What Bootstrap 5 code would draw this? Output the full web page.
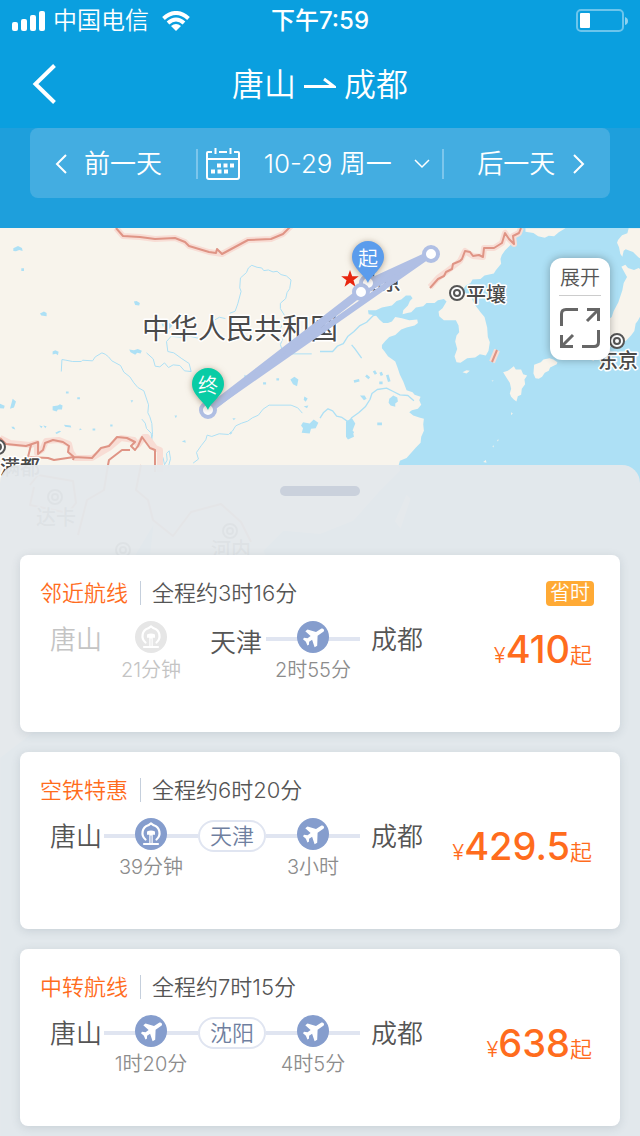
<!DOCTYPE html>
<html lang="zh-CN">
<head>
<meta charset="utf-8">
<meta name="viewport" content="width=device-width, initial-scale=1">
<title>唐山 — 成都</title>
<link rel="stylesheet" href="https://cdn.jsdelivr.net/npm/bootstrap@5.3.0/dist/css/bootstrap.min.css">
<style>
  body { font-family: Inter, "Noto Sans CJK SC", sans-serif; font-weight: 350; color: #555; background: #e3e8eb; line-height: 1.2; }
  button { font-family: inherit; font-weight: inherit; line-height: inherit; color: inherit; background: none; border: 0; padding: 0; }
  svg { display: block; flex: none; }
  .app-head { background: #0a9fdf; color: #fff; }
  .status-row { display: grid; grid-template-columns: 1fr auto 1fr; height: 40px; padding: 2px 12px 0; font-size: 24px; }
  .clock-text { font-weight: 500; font-size: 24px; }
  .title-row { display: grid; grid-template-columns: 64px 1fr 64px; height: 88px; }
  .title-row h1 { font-size: 32px; font-weight: 350; padding-top: 2px; }
  .date-band { background: #1e9fdc; height: 100px; padding: 0 30px; color: #fff; }
  .date-bar { display: grid; grid-template-columns: 2fr 3fr 2fr; height: 70px; border-radius: 8px; background: #43ade1; font-size: 26px; }
  .date-bar button { padding-top: 2px; }
  .date-pick::before, .date-pick::after { content: ""; width: 2px; height: 30px; background: #7cc6ec; }
  .stage { position: relative; }
  .map-art { position: absolute; inset: 0; width: 100%; height: 100%; }
  .map-label { fill: #4a4a4a; stroke: #fff; stroke-width: 3px; paint-order: stroke; stroke-linejoin: round; font-weight: 500; font-size: 20px; text-anchor: middle; }
  .country-label { font-size: 28px; font-weight: 400; }
  .pin-label { fill: #fff; font-size: 20px; font-weight: 350; text-anchor: middle; }
  .map-tools { position: relative; height: 237px; padding: 30px 30px 0; }
  .expand-btn { width: 60px; height: 102px; border-radius: 12px; background: #fff; box-shadow: 0 0 8px rgba(0,0,0,.3); font-size: 20px; color: #555; }
  .expand-btn span { border-bottom: 1px solid #ccc; padding: 0 1px 5px; margin: 8px 0 12px; }
  .sheet { position: relative; border-radius: 18px 18px 0 0; background: rgba(228,232,235,.96); padding: 21px 20px 10px; }
  .grip { width: 80px; height: 10px; border-radius: 5px; background: #cad1dc; margin: 0 auto 59px; display: block; }
  .trip-list { display: grid; gap: 20px; }
  .trip { height: 177px; border-radius: 8px; background: #fff; box-shadow: 0 2px 10px rgba(70,90,105,.16); padding: 24px 26px 0 20px; }
  .trip-kind { color: #ff6c1d; border-right: 1px solid #c5cfdc; padding-right: 12px; margin-right: 11px; line-height: 24px; }
  .trip-title { font-size: 22px; height: 28px; }
  .save-tag { background: #ffaa35; color: #fff; font-size: 20px; line-height: 25px; border-radius: 4px; padding: 0 4px; }
  .route { padding-left: 10px; margin-top: 14px; }
  .city { font-size: 26px; line-height: 32px; margin-top: 3px; width: 54px; }
  .leg { width: 94px; font-size: 20px; line-height: 24px; color: #8c8c8c; }
  .track { height: 32px; width: 100%; background: linear-gradient(#e0e5f1, #e0e5f1) 0 16px / 100% 4px no-repeat; }
  .track, .stop-pill { display: flex; justify-content: center; }
  .leg-time { margin-top: 5px; white-space: nowrap; }
  .stop { width: 68px; }
  .stop-pill { border: 2px solid #e0e5f1; border-radius: 16px; height: 32px; line-height: 29px; font-size: 22px; margin-top: 2px; color: #6f7f9f; }
  .stop .city { margin: 6px 0 0 12px; white-space: nowrap; }
  .faded .track { background: none; }
  .faded { color: #c4c4c4; }
  .end-city { margin-left: 11px; }
  .fare { color: #ff6c1d; font-size: 22px; line-height: 48px; margin-top: 18px; padding-right: 2px; white-space: nowrap; }
  .fare strong { font-size: 38px; font-weight: 500; }
</style>
</head>
<body>
<svg width="0" height="0" class="position-absolute" aria-hidden="true">
  <symbol id="plane" viewBox="0 0 32 32">
    <circle cx="16" cy="16" r="16" fill="#859dcd"/>
    <path fill="#fff" d="M26.600 8.200c.9 1 .3 2.300-1 3.100L20.600 14.700 20.200 24.800l-2.600 1.500-2.500-7.600-3 2.100-.2 3-1.500.8-1.500-3.900L6 18.200l1-1.400 3.600.4 3-2.200L8.300 10.300l2.200-1.800 8.500 2.400 5.500-3.300q1.300-.4 2.100.6z"/>
  </symbol>
  <symbol id="train" viewBox="0 0 32 32">
    <circle cx="16" cy="16" r="16" fill="currentColor"/>
    <path fill="none" stroke="#fff" stroke-width="2.200" stroke-linecap="round" stroke-linejoin="round" d="M10.500 21.500a8.200 8.200 0 0 1 2.800-14.200L16 5.300l2.700 2a8.200 8.200 0 0 1 2.800 14.200M9 26h14"/>
    <path fill="#fff" d="M12 13.400q4-2 8 0v3.400h-2.300V25h-3.400v-8.200H12z"/>
    <path stroke="currentColor" d="M16 17.500V25"/>
  </symbol>
</svg>

<header class="app-head">
  <div class="status-row align-items-center">
    <div class="d-flex align-items-center gap-2">
      <svg width="33" height="20" fill="#fff"><rect y="11" width="6" height="9" rx="2"/><rect x="9" y="8" width="6" height="12" rx="2"/><rect x="18" y="4" width="6" height="16" rx="2"/><rect x="27" width="6" height="20" rx="2"/></svg>
      <span>中国电信</span>
      <svg class="ms-1" width="30" height="20" viewBox="0 0 30 20"><g fill="none" stroke="#fff" stroke-width="4"><path d="M2.500 7.500Q15-3.500 27.500 7.500"/><path d="M7 12q8-7 16 0"/></g><path fill="#fff" d="M10 15q5-4 10 0l-5 5z"/></svg>
    </div>
    <time class="clock-text">下午7:59</time>
    <svg class="ms-auto" width="53" height="24"><rect x="2" y="1" width="46" height="21" rx="4" fill="none" stroke="#6cc5ec" stroke-width="2"/><rect x="5" y="4" width="10" height="15" rx="1" fill="#fff"/><path d="M50 8q3 1 3 4t-3 4z" fill="#8dd2f0"/></svg>
  </div>
  <div class="title-row align-items-center">
    <button type="button" aria-label="返回" class="ps-4 h-100"><svg class="ms-2" width="24" height="42" viewBox="0 0 24 42"><path d="M22.500 2.500 3.500 21l19 18.500" fill="none" stroke="#fff" stroke-width="4"/></svg></button>
    <h1 class="m-0 d-flex justify-content-center align-items-center gap-2">唐山<svg width="32" height="16"><path d="M0 9.500h30L20 2" fill="none" stroke="#fff" stroke-width="3"/></svg>成都</h1>
  </div>
</header>

<nav class="date-band" aria-label="日期">
  <div class="date-bar">
    <button type="button" class="d-flex align-items-center ps-4"><svg class="me-3" width="14" height="22"><path d="m12 2-9 9 9 9" fill="none" stroke="#fff" stroke-width="2"/></svg>前一天</button>
    <button type="button" class="date-pick d-flex align-items-center gap-2">
      <svg width="34" height="32" fill="none" stroke="#fff" stroke-width="2"><path d="M6 4H2q-1 0-1 1v24q0 2 2 2h28q2 0 2-2V5q0-1-1-1h-4M13 4h8M9.500 0v6M24.500 0v6M1 11h32"/><path d="M11 17.500h18M5 23.500h18" stroke-width="4" stroke-dasharray="4 2.500"/></svg>
      <span class="ms-3 me-auto">10-29 周一</span>
      <svg class="me-1" width="16" height="10"><path d="m1 1 7 7 7-7" fill="none" stroke="#fff" stroke-width="1.500"/></svg>
    </button>
    <button type="button" class="d-flex align-items-center justify-content-center ps-2">后一天<svg class="ms-3" width="14" height="22"><path d="m3 2 9 9-9 9" fill="none" stroke="#fff" stroke-width="2"/></svg></button>
  </div>
</nav>

<main class="stage overflow-hidden">
  <svg class="map-art" viewBox="0 228 640 908" preserveAspectRatio="xMidYMin slice" role="img" aria-label="航线地图">
    <rect y="228" width="640" height="908" fill="#f8f4ec"/>
    <!-- seas and east-coast islands -->
    <g transform="translate(320 225) scale(.333)">
      <path fill="#ade0f5" d="M970 0H608l-4 26-14 10-16 22-18 18-10 14-4 12 2 14-16 20-6 10-28 6-12 10-24 2-6 10-14 8-10 14 10 8 16 12 10 22 18 24 12 14 8 32 2 28 6 16-4 26-8 14-18-4-14 10-24 2-20 14-12-2-6-18 8-22-6-22 4-18 8-10-2-20-8-16-36 0-14-12-2-14 12-10 12-20-8-8-18 4-10 8-24 0-10 10-22 4-14 14-12 2-14 4 2-12 14-14 6-14 8-8-6-8-14 0-14 12-14 4-14 14-30 6-18 8-24 0 2 12 22 4 10 12 12 10 14 0 12-4 10-14 20 4 22 6 24-2 2 10-10 8-24 6-16 6-18 16-18 6-12 12-10 12 0 10 8 10 10 14 22 16 6 16 8 24 10 20 10 26 18 6 6 8 18 6-4 10 6 14-10 12-18 4-8 6 12 10 18 6 14 4-2 16 2 20-8 18-2 18-14 14-16 18-12 14-20 8-4 14 4 16-60 60-80 90-100 40-110-10-60 60 60 120 20 240-140 160-160-80-160-80L-500 900-620 1100-700 1400-960 1600V2800H970z"/>
      <g fill="#f8f4ec">
        <path d="M617 10h120l-20 12-14 12-16-2-12 6-20-4-14-10-24-4zM895 45l12-14 16-6 4-15h43v95l-14-8-16-16-10-4-12-4-6 4-4 18-6-8-4-20-6-14zM905 125l12-6 8 10 18 6 14-6 13 11v130l-8 4-8 14-6 8-4 22-10 14-16 16-20 6-14 8-20 6-22 4-14 20-6 16-12-4-8-12-6-12-14-2-12 10-10-8-10 10-20 2-12-16-14 2 12-16 24-18 14-14 26-18 20 2 14-6 12 2 24-16 26-18 6-18 14-26 12-36 4-22 10-18z"/>
        <path d="m643 420 20-8 8-8 18-4 12 4 12 8-2 6-20 10-4 10-12 6-8 12-10 6-10-2-6-14zM550 442l14-4 18-14 6 10 16 0 6 14 12 4-8 12 2 14-10 14-2 18-10 4-4 16-8-6-8-8-4-10 4-14-4-18-8-12zM428 442l12-6 10 2-10 8zM225 890l35-80 12 12-30 90zM574 562l5 4-5 5zM515 468l6-2-2 4zM532 646l5-2-3 6zM518 664l5-2-3 6zM490 712l8-6 2 8z"/>
      </g>
      <g fill="none" stroke="#ade0f5" stroke-width="4" stroke-linejoin="round">
        <path d="M0 380h38l14-16 18-8 14-22 18-14 18-18 20-10 20-20 16-4M0 580l10-16 14-12 14 6 12 16 16 4 20 14 10-14 20-14 20-18 14-22 6-18 16-12 28-4 20 10 20 10 24 2 18 16M95 360l10 12 20 28M84 590l10 14-8 12 14 6-16 14"/>
        <path d="m102 470 16-4m20-14 10 8m14-22 6 10m14-6 4 10m-8 22h10m14-24 6 20M172 597h14" stroke-width="8"/>
      </g>
      <path fill="#ade0f5" d="m208 522 12-10 12 6 2 12-8 6 0 10-14-4-6-8zM120 512l14 0 6 10-8 4zM78 590l18-10 10 16-8 20 4 20-18 8-6-8z"/>
    </g>
    <!-- rivers and lakes of the west -->
    <g transform="translate(0 225) scale(.333)" fill="none" stroke="#ade0f5" stroke-width="3" stroke-linejoin="round">
      <path d="M184 440l2-36 12 2 20 4 26 0 4-4 30 2 8-12 20-12 10 4 10 8 10 12 26 14 10 20 18 14 12 18 12 14 18 10 14 42-2 24 6 12 6 20 2 34-4 22 14 20 12 8 10 20 4 20 8-14-2-20 8-8 4 24-8 30M500 350l4 30 18 4 22 16 24 16 6 24-20-2-14-16-20-2-14 8-12-14-14 12-14-2-6-22-20-18M500 350l14-16 36 4 20-4 34 8M690 265l16-6 8-22 10-38-4-10 2-30 18-16 6-14 10-8 16 6 14 2 6 8 14-2 14 6 12-2 12 10 16 4 14 12-4 26-8 12-4 18-16 14 0 16 12 20-2 20-10 20 10 24-10 24 4 12 30 16h60M580 715l16-12-6-20 14-20 14-18 4-14 14 4 22-8 28 2 12-10 10-16 18-8 18-6 14-10 18-8 14-18 18-12h66l20 8 14 16M426 583l10 12 4 16 14 14 4 40 18 20M645 285l14-8 18 4"/>
      <path stroke="none" fill="#ade0f5" d="M40 70l14-7 12 6 2 9-10-3-10 4-8-1zM64 130h8v8h-8zM402 230l8-2 10 6-2 8-12-2zM120 266l12-6 8 4v10l-16-2zM158 380l8-4 10 5-2 10-6-4-10 2zM388 374l14 2 12-4 12 6-4 8-10-2-6 6-14-8zM158 544l16-2 6-4 8 4-2 12-12 0-4 6-12-4zM0 537l14 6-2 8-12-1zM38 522l10 8-6 18-12 4zM166 624l12-6 6 2-14 8zM192 600l20 2 2 6-18-2zM34 606l8 0 4 8-8-2zM118 602l10 2-4 6zM130 602l10 2-4 6zM240 610l6 4-8 2zM278 611h8v6h-8zM331 599h7v6h-7zM198 500h8v6h-8zM232 517h8v6h-8zM524 572l8 0-4 8zM392 526l8 0-4 8zM546 650l10-4 2 8zM734 450l10 6-2 6-8-4zM790 472h9v7h-9zM830 460h8v7h-8zM872 464l12-8 12 8-4 20-12-6zM482 286l20 4 16 12-10 10-20-8zM914 515l10 6-6 10-6-6zM912 544l14-2-4 8zM910 592l20 4 12-12 14 10-8 16-14 2-4 14-24-2 4-14-6-8zM690 620l8 4-6 6zM698 580h10l-6 6z"/>
    </g>
    <!-- borders: soft halo below a firm line -->
    <g fill="none" stroke-linejoin="round" stroke="#df9485" stroke-width="2">
      <path stroke="#f8ddd5" stroke-width="6" d="M116 228l7 8 17 1 15 2 20-1 10 4 4 4 20 6 7 1 6 1 26-14 23-1 12-5 9-9M521 228l-2 5-6 3 1 8-5-5-4-6-3 10-8 5h-10l-1 9-10-1-8-5-5 10-14 11-8 6-8 9M497 350l-5 12M0 438l10 5 20 2 7-2v10l5-3 4-9 13-1 10 4 2 8 4 6 17 0 17-10 12-10 13 2 4 5 6-8 3 0 8 11 5 2v22"/>
      <path d="M116 228l7 8 17 1 15 2 20-1 10 4 4 4 20 6 7 1 1-4 5 5 26-14 23-1 12-5 9-9M521 228l-2 5-6 3 1 8-5-5-4-6-3 10-8 5h-10l-1 9-4-2-6 1-3-4-5-1-3 8-2 2-7 3-1 5-6 3-2 4-6 3-8 9M497 350l-5 12M0 438l6 6 20 2 12-4v12l5-4 2-7 8-3 10 2 6 4-1 6 6 5-1 3M31 445l-3 12 20 1 6 2 20-3 18 1 9-10 8-2 8-9 10 1 8 4-4 4 4 4 3-4 4-9 8 11 5 2v22M108 465l1-5 13-10 8 0M108 465l-4 25-17 10-9 35M30 485l8-10 35 6 3 22-8 10-38-8 4-18M141 465l-5 25 12 10 5 20 20 16 18-24 30-8 20 18 10 20"/>
    </g>
    <g fill="none" stroke="#555" stroke-width="2">
      <g fill="#fff"><circle cx="457" cy="293" r="7"/><circle cx="617" cy="341" r="7"/><circle cx="-2" cy="447" r="7"/><circle cx="55" cy="497" r="7"/><circle cx="230" cy="531" r="7"/><circle cx="123" cy="550" r="7"/></g>
      <circle cx="457" cy="293" r="3"/><circle cx="617" cy="341" r="3"/><circle cx="-2" cy="447" r="3"/><circle cx="55" cy="497" r="3"/><circle cx="230" cy="531" r="3"/><circle cx="123" cy="550" r="3"/>
    </g>
    <text class="map-label country-label" x="240" y="339">中华人民共和国</text>
    <text class="map-label" x="381" y="290">北京</text>
    <text class="map-label" x="486" y="302">平壤</text>
    <text class="map-label" x="618" y="368">东京</text>
    <text class="map-label" x="20" y="475">满都</text>
    <text class="map-label" x="56" y="525">达卡</text>
    <text class="map-label" x="231" y="557">河内</text>
    <path fill="#e8260f" d="m350 270 2.200 6.300h6.600l-5.300 4 2 6.400-5.500-3.900-5.500 3.900 2-6.400-5.300-4h6.600z"/>
    <g fill="none" stroke="#b0bfe4" stroke-linecap="round">
      <path stroke-width="8" d="M208 410 361 292"/>
      <path stroke-width="6" d="M208 410 431 254"/>
      <path stroke-width="7" d="M361 292l70-38"/>
      <path stroke-width="7" d="M368 283l63-29"/>
    </g>
    <g fill="#fff" stroke="#b0bfe4" stroke-width="4"><circle cx="368" cy="283" r="7"/><circle cx="361" cy="292" r="7"/><circle cx="431" cy="254" r="7"/><circle cx="208" cy="410" r="7"/></g>
    <g style="filter:drop-shadow(0 1px 3px rgba(110,80,50,.5))">
      <path fill="#5b9cec" d="M368 283c-3-8-16-15-16-26a16 16 0 0 1 32 0c0 11-13 18-16 26z"/>
      <path fill="#08cca5" d="M208 410c-3-8-16-15-16-26a16 16 0 0 1 32 0c0 11-13 18-16 26z"/>
    </g>
    <text class="pin-label" x="368" y="266">起</text>
    <text class="pin-label" x="208" y="393">终</text>
  </svg>

  <div class="map-tools d-flex justify-content-end">
    <button type="button" class="expand-btn d-flex flex-column align-items-center">
      <span>展开</span>
      <svg width="40" height="40" fill="none" stroke="#666" stroke-width="3"><path d="M1.500 18V6q0-4.500 4.500-4.500h12M27 1.500h11.500V13M38.500 1.500 27 13M38.500 22v12q0 4.500-4.500 4.500H22M1.500 27v11.500H13M1.500 38.500 13 27"/></svg>
    </button>
  </div>

  <section class="sheet">
    <button type="button" class="grip" aria-label="拖动列表"></button>
    <div class="trip-list">
      <article class="trip">
        <div class="trip-title d-flex align-items-center"><span class="trip-kind">邻近航线</span><span>全程约3时16分</span><span class="save-tag ms-auto">省时</span></div>
        <div class="d-flex justify-content-between">
          <div class="route d-flex">
            <span class="city faded">唐山</span>
            <div class="leg faded text-center"><div class="track"><svg width="32" height="32" style="color:#e6e6e6"><use href="#train"/></svg></div><div class="leg-time">21分钟</div></div>
            <div class="stop"><div class="city">天津</div></div>
            <div class="leg text-center"><div class="track"><svg width="32" height="32"><use href="#plane"/></svg></div><div class="leg-time">2时55分</div></div>
            <span class="city end-city">成都</span>
          </div>
          <div class="fare">¥<strong>410</strong>起</div>
        </div>
      </article>
      <article class="trip">
        <div class="trip-title d-flex align-items-center"><span class="trip-kind">空铁特惠</span><span>全程约6时20分</span></div>
        <div class="d-flex justify-content-between">
          <div class="route d-flex">
            <span class="city">唐山</span>
            <div class="leg text-center"><div class="track"><svg width="32" height="32" style="color:#859dcd"><use href="#train"/></svg></div><div class="leg-time">39分钟</div></div>
            <div class="stop"><div class="stop-pill">天津</div></div>
            <div class="leg text-center"><div class="track"><svg width="32" height="32"><use href="#plane"/></svg></div><div class="leg-time">3小时</div></div>
            <span class="city end-city">成都</span>
          </div>
          <div class="fare">¥<strong>429.5</strong>起</div>
        </div>
      </article>
      <article class="trip">
        <div class="trip-title d-flex align-items-center"><span class="trip-kind">中转航线</span><span>全程约7时15分</span></div>
        <div class="d-flex justify-content-between">
          <div class="route d-flex">
            <span class="city">唐山</span>
            <div class="leg text-center"><div class="track"><svg width="32" height="32"><use href="#plane"/></svg></div><div class="leg-time">1时20分</div></div>
            <div class="stop"><div class="stop-pill">沈阳</div></div>
            <div class="leg text-center"><div class="track"><svg width="32" height="32"><use href="#plane"/></svg></div><div class="leg-time">4时5分</div></div>
            <span class="city end-city">成都</span>
          </div>
          <div class="fare">¥<strong>638</strong>起</div>
        </div>
      </article>
    </div>
  </section>
</main>
<script src="https://cdn.jsdelivr.net/npm/bootstrap@5.3.0/dist/js/bootstrap.bundle.min.js"></script>
</body>
</html>
